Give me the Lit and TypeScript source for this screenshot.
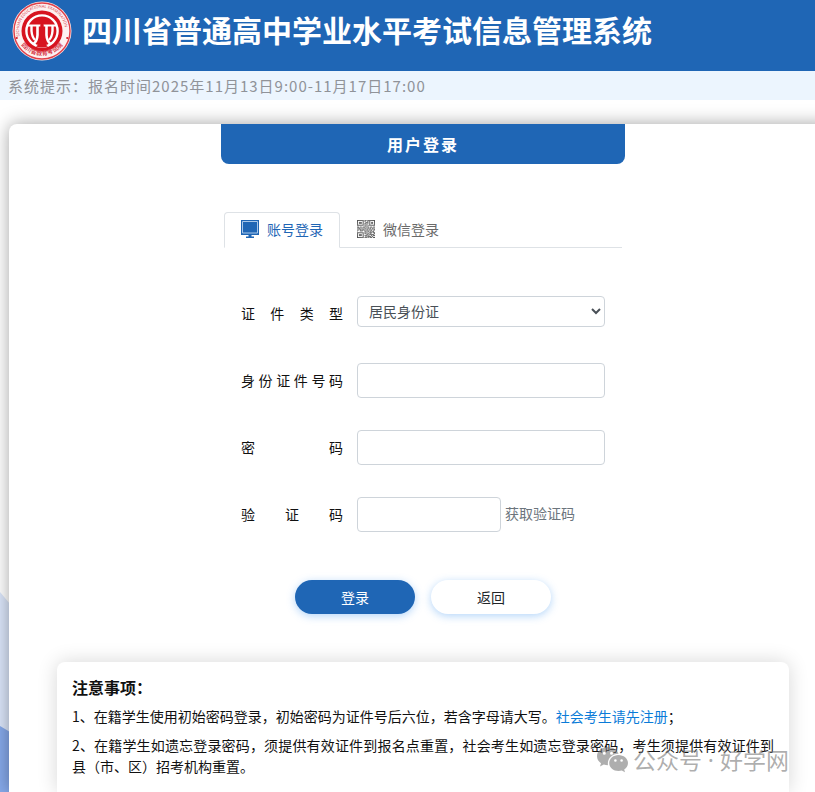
import { LitElement, html, css, svg } from "lit";
import { customElement, state } from "lit/decorators.js";

const QR_ROWS = [
  "1111111011011111111",
  "1000001010010100001",
  "1011101001110101101",
  "1011101011010101101",
  "1000001010100100001",
  "1111111010101111111",
  "0000000011010000000",
  "1101101100101011011",
  "0110010111011010100",
  "1011101001010110111",
  "0101011110110101001",
  "1001110010101011010",
  "0000000011011010110",
  "1111111010100111011",
  "1000001011011010001",
  "1011101000110111110",
  "1011101011101001011",
  "1000001001011110100",
  "1111111011101011011",
];

@customElement("seal-logo")
class SealLogo extends LitElement {
  static styles = css`
    :host { display: block; flex: none; }
    svg { display: block; width: 60px; height: 60px; }
    text { font-family: "Noto Sans", "Noto Sans CJK SC", sans-serif; fill: #d8404c; }
    .en { font-size: 4px; }
    .zh { font-size: 6px; font-weight: 700; }
  `;
  render() {
    return html`<svg viewBox="0 0 60 60" role="img" aria-label="四川省教育考试院">
      <circle cx="30" cy="30" r="29.5" fill="#fbe4e4" />
      <circle cx="30" cy="30" r="28" fill="#fdf1f1" stroke="#e0404a" stroke-width="1.4" />
      <circle cx="30" cy="30" r="20.5" fill="#d7141f" />
      <circle cx="30" cy="30" r="15.6" fill="#d7141f" stroke="#fff" stroke-width="2.4" />
      <defs>
        <path id="top" d="M8.2 37 A23 23 0 1 1 51.8 37" />
        <path id="low" d="M7.5 42 A26.6 26.6 0 0 0 52.5 42" />
      </defs>
      <text class="en"><textPath href="#top" startOffset="2">SICHUAN EDUCATIONAL EXAMINATION</textPath></text>
      <text class="zh"><textPath href="#low" startOffset="50%" text-anchor="middle">四川省教育考试院</textPath></text>
      <g fill="none" stroke="#fff">
        <path d="M16 24.5H28.600M31.400 24.5H44" stroke-width="2" />
        <path d="M19.5 25V30Q20 36 23 39" stroke-width="2.4" />
        <path d="M40.5 25V30Q40 36 37 39" stroke-width="2.4" />
        <path d="M25.5 25V34Q25.2 40 21.5 43" stroke-width="2.6" />
        <path d="M34.5 25V34Q34.8 40 38.500 43" stroke-width="2.6" />
      </g>
      <path d="M28.500 23.500H31.500V37Q32 43 36 45.500Q30 47.500 24 45.500Q28 43 28.500 37Z" fill="#d7141f" />
      <circle cx="4.800" cy="37" r="1" fill="#d7141f" />
      <circle cx="55.200" cy="37" r="1" fill="#d7141f" />
    </svg>`;
  }
}

@customElement("app-root")
class AppRoot extends LitElement {
  @state() tab = "account";

  static styles = css`
    :host {
      display: flex;
      flex-direction: column;
      position: relative;
      min-height: 100vh;
      overflow: hidden;
      background: #fff;
      color: #212529;
      font: 14px/21px "Noto Sans CJK SC", "Noto Sans", sans-serif;
    }
    * { box-sizing: border-box; }
    button, input, select { font: inherit; margin: 0; }
    .header {
      display: flex;
      align-items: center;
      gap: 10px;
      height: 71px;
      padding: 0 12px 9px;
      background: #1f66b5;
      color: #fff;
    }
    h1 { margin: 0; padding-bottom: 4px; font-size: 30px; line-height: 40px; font-weight: 700; white-space: nowrap; }
    .hint {
      margin: 0;
      padding: 4px 8px;
      background: #ecf5fe;
      color: #909399;
      font-size: 15px;
      letter-spacing: 1px;
    }
    .backdrop { position: absolute; left: 0; bottom: 0; width: 40px; height: 210px; }
    .card {
      position: relative;
      flex: 1;
      display: flex;
      flex-direction: column;
      align-items: center;
      margin: 24px -22px 0 9px;
      padding: 0 48px;
      background: #fff;
      border-radius: 8px 8px 0 0;
      box-shadow: 0 0 18px rgba(0, 0, 0, 0.36);
    }
    .banner {
      width: 404px;
      margin: 0;
      padding: 8px 0;
      border-radius: 0 0 8px 8px;
      background: #1f66b5;
      color: #fff;
      font-size: 16px;
      line-height: 24px;
      font-weight: 700;
      letter-spacing: 2px;
      text-align: center;
    }
    .tabs {
      display: flex;
      width: 398px;
      margin-top: 48px;
      border-bottom: 1px solid #dee2e6;
    }
    .tab {
      display: flex;
      align-items: center;
      gap: 8px;
      height: 36px;
      margin-bottom: -1px;
      padding: 0 16px 2px;
      border: 1px solid transparent;
      border-radius: 4px 4px 0 0;
      background: none;
      color: #6a6a6a;
    }
    .tab.on { border-color: #dee2e6; border-bottom-color: #fff; background: #fff; color: #1f66b5; }
    .tab svg { width: 18px; height: 18px; }
    form { display: flex; flex-direction: column; gap: 32px; width: 364px; margin-top: 48px; }
    .row { display: flex; height: 35px; }
    label {
      width: 102px;
      margin-right: 14px;
      line-height: 34px;
      color: #111;
      text-align: justify;
      text-align-last: justify;
    }
    .field {
      flex: 1;
      min-width: 0;
      padding: 0 12px;
      border: 1px solid #ced4da;
      border-radius: 4px;
      background: #fff;
      color: #495057;
    }
    select.field { height: 31px; padding: 0 7px 2px; }
    .field.code { flex: none; width: 144px; }
    .get { padding: 0 4px 2px; border: 0; background: none; color: #6c757d; }
    .actions { display: flex; justify-content: center; gap: 16px; margin-top: 16px; }
    .btn {
      width: 120px;
      height: 34px;
      padding: 0;
      border: 0;
      border-radius: 17px;
      background: #fff;
      color: #212529;
      box-shadow: 0 2px 8px rgba(64, 150, 240, 0.4);
    }
    .btn.main { background: #1f66b5; color: #fff; }
    .notice {
      flex: 1;
      align-self: stretch;
      margin-top: 48px;
      padding: 15px 15px 0;
      border-radius: 8px 8px 0 0;
      background: #fff;
      color: #111;
      box-shadow: 0 0 20px rgba(0, 0, 0, 0.16);
    }
    .notice h2 { margin: 0 0 8px; font-size: 16px; line-height: 21px; font-weight: 700; }
    .notice p { margin: 0 0 8px; text-align: justify; }
    a { color: #0a7bd8; text-decoration: none; }
    .mark {
      position: absolute;
      right: 26px;
      bottom: 18px;
      display: flex;
      align-items: center;
      gap: 5px;
      color: rgba(120, 120, 120, 0.6);
      font-family: "Noto Sans", "Noto Sans CJK SC", sans-serif;
      font-size: 23px;
      line-height: 28px;
      white-space: nowrap;
      pointer-events: none;
    }
    .mark svg { width: 31px; height: 26px; }
  `;

  private row(id: string, text: string, type = "text") {
    return html`<div class="row">
      <label for=${id}>${text}</label>
      <input class="field" id=${id} type=${type} />
    </div>`;
  }

  render() {
    return html`
      <header class="header">
        <seal-logo></seal-logo>
        <h1>四川省普通高中学业水平考试信息管理系统</h1>
      </header>
      <p class="hint">系统提示：报名时间2025年11月13日9:00-11月17日17:00</p>
      <svg class="backdrop" viewBox="0 0 40 210" aria-hidden="true">
        <path d="M0 10L40 58V210H0Z" fill="#dbe6fa" />
        <path d="M0 144L40 168V210H0Z" fill="#86a9ea" />
      </svg>
      <main class="card">
        <h2 class="banner">用户登录</h2>
        <div class="tabs" role="tablist">
          <button class="tab ${this.tab === "account" ? "on" : ""}" role="tab" @click=${() => (this.tab = "account")}>
            <svg viewBox="0 0 18 18" aria-hidden="true">
              <path d="M0 0H18V15H0Z" fill="#1f66b5" />
              <path d="M1.5 1.5H16.5V13H1.5Z" fill="none" stroke="#a9c8ea" />
              <path d="M7.500 15H10.500V16.500H13V18H5V16.500H7.500Z" fill="#1f66b5" />
            </svg>
            账号登录
          </button>
          <button class="tab ${this.tab === "wechat" ? "on" : ""}" role="tab" @click=${() => (this.tab = "wechat")}>
            <svg viewBox="0 0 19 19" aria-hidden="true">
              ${QR_ROWS.map((r, y) => [...r].map((c, x) =>
                c === "1" ? svg`<rect x=${x} y=${y} width="1" height="1" fill="#444" />` : null))}
            </svg>
            微信登录
          </button>
        </div>
        <form @submit=${(e: Event) => e.preventDefault()}>
          <div class="row">
            <label for="kind">证件类型</label>
            <select class="field" id="kind"><option>居民身份证</option></select>
          </div>
          ${this.row("number", "身份证件号码")}
          ${this.row("password", "密码", "password")}
          <div class="row">
            <label for="code">验证码</label>
            <input class="field code" id="code" type="text" />
            <button class="get" type="button">获取验证码</button>
          </div>
          <div class="actions">
            <button class="btn main" type="submit">登录</button>
            <button class="btn" type="button">返回</button>
          </div>
        </form>
        <section class="notice">
          <h2>注意事项：</h2>
          <p>1、在籍学生使用初始密码登录，初始密码为证件号后六位，若含字母请大写。<a href="#register">社会考生请先注册</a>；</p>
          <p>2、在籍学生如遗忘登录密码，须提供有效证件到报名点重置，社会考生如遗忘登录密码，考生须提供有效证件到县（市、区）招考机构重置。</p>
        </section>
      </main>
      <div class="mark">
        <svg viewBox="0 0 31 26" aria-hidden="true">
          <path fill="currentColor" fill-rule="evenodd" d="M11 0C5 0 0 4 0 9.200C0 12 1.500 14.500 4 16.200L3 19.500L6.800 17.500C8 17.900 9.500 18.200 11 18.200C10 12 14.500 7 21.500 6.800C20.200 2.800 16 0 11 0ZM7.300 4.700A1.500 1.500 0 1 1 7.300 7.700A1.500 1.500 0 1 1 7.300 4.700ZM14.500 4.700A1.500 1.500 0 1 1 14.500 7.700A1.500 1.500 0 1 1 14.500 4.700Z" />
          <path fill="currentColor" fill-rule="evenodd" d="M21.500 8C16.500 8 12.200 11.600 12.200 16C12.200 20.500 16.500 24 21.500 24C22.700 24 23.800 23.800 24.800 23.500L28 25.200L27.200 22.400C29.500 21 31 18.700 31 16C31 11.600 26.500 8 21.500 8ZM18.400 12.200A1.300 1.300 0 1 1 18.400 14.800A1.300 1.300 0 1 1 18.400 12.200ZM24.600 12.200A1.300 1.300 0 1 1 24.600 14.800A1.300 1.300 0 1 1 24.600 12.200Z" />
        </svg>
        <span>公众号 · 好学网</span>
      </div>
    `;
  }
}
